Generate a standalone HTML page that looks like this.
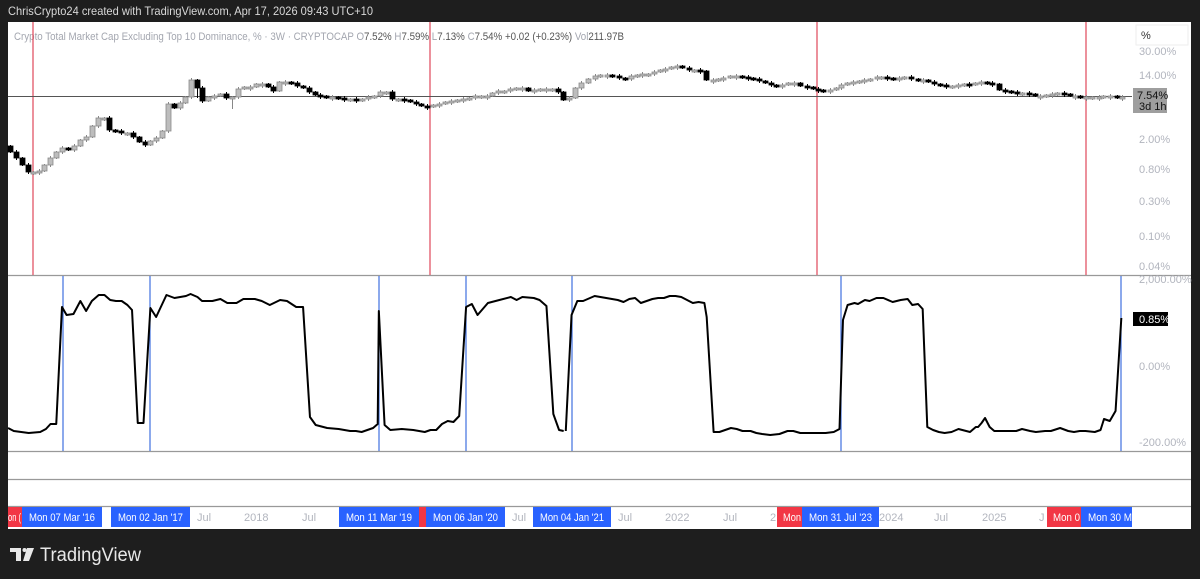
<!DOCTYPE html>
<html><head><meta charset="utf-8"><style>
html,body{margin:0;padding:0;background:#1e1e1e;width:1200px;height:579px;overflow:hidden;font-family:"Liberation Sans",sans-serif}
svg{position:absolute;left:0;top:0}
</style></head><body>
<svg id="s" width="1200" height="579" xmlns="http://www.w3.org/2000/svg" font-family="Liberation Sans, sans-serif">
<rect x="0" y="0" width="1200" height="579" fill="#1e1e1e"/>
<text x="8" y="15" font-size="12" fill="#d8d8d8" textLength="365" lengthAdjust="spacingAndGlyphs">ChrisCrypto24 created with TradingView.com, Apr 17, 2026 09:43 UTC+10</text>
<rect x="8" y="22" width="1183" height="507" fill="#fff"/>
<text x="14" y="40" font-size="11" fill="#a3a6af" textLength="610" lengthAdjust="spacingAndGlyphs">Crypto Total Market Cap Excluding Top 10 Dominance, % · 3W · CRYPTOCAP  O<tspan fill="#555">7.52%</tspan>  H<tspan fill="#555">7.59%</tspan>  L<tspan fill="#555">7.13%</tspan>  C<tspan fill="#555">7.54%</tspan>  <tspan fill="#555">+0.02 (+0.23%)</tspan>  Vol<tspan fill="#555">211.97B</tspan></text>
<line x1="8" y1="275.5" x2="1191" y2="275.5" stroke="#999" stroke-width="1.2"/>
<line x1="8" y1="451.5" x2="1191" y2="451.5" stroke="#999" stroke-width="1.2"/>
<line x1="8" y1="479.5" x2="1191" y2="479.5" stroke="#999" stroke-width="1.2"/>
<line x1="8" y1="506.5" x2="1191" y2="506.5" stroke="#999" stroke-width="1.2"/>
<g stroke="#e0485a" stroke-width="1.2">
<line x1="33" y1="22" x2="33" y2="275"/><line x1="430" y1="22" x2="430" y2="275"/><line x1="817" y1="22" x2="817" y2="275"/><line x1="1086" y1="22" x2="1086" y2="275"/>
</g>
<g stroke="#3f70e0" stroke-width="1.2">
<line x1="63" y1="276" x2="63" y2="451"/><line x1="150" y1="276" x2="150" y2="451"/><line x1="379" y1="276" x2="379" y2="451"/><line x1="466" y1="276" x2="466" y2="451"/><line x1="572" y1="276" x2="572" y2="451"/><line x1="841" y1="276" x2="841" y2="451"/><line x1="1121" y1="276" x2="1121" y2="451"/>
</g>
<line x1="8" y1="96.5" x2="1132" y2="96.5" stroke="#555" stroke-width="1"/>
<g id="candles"></g>
<g fill="none" stroke="#000" stroke-width="2" stroke-linejoin="round">
<polyline vector-effect="non-scaling-stroke" transform="scale(1.148,1)" points="7,428 12,431 25,433 35,432 40,429 44,424 49,424 54,307 58,315 64,314 70,301 75,311 80,301 86,295 91,295 96,300 101,301 106,301 111,305 115,310 120,423 125,423 131,308 136,317 145,295 152,298 162,296 166,294 172,297 176,301 185,301 192,299 198,303 206,303 212,299 222,299 228,301 235,305 244,300 250,301 258,307 264,307 270,417 275,425 285,428 295,429 305,431 310,431 315,432 320,430 325,428 329,424 330,311 335,425 340,430 350,429 360,430 370,432 375,430 380,430 385,424 390,421 395,422 400,416 406,307 411,304 416,315 425,303 435,300 445,297 450,300 455,297 465,298 470,300 476,306 482,414 487,430 491,431"/>
<polyline vector-effect="non-scaling-stroke" transform="translate(560,0) scale(1.155,1) translate(-560,0)" points="565,431 570,315 575,301 580,301 590,296 600,298 610,300 615,302 620,299 625,298 630,303 640,299 645,298 650,298 655,296 660,296 665,297 670,300 675,303 680,302 685,303 687,317 693,432 698,432 703,430 708,428 713,429 718,431 725,431 730,433 735,434 742,435 750,434 757,431 762,431 768,433 775,433 782,433 790,433 797,432 802,429 805,320 809,305 815,303 818,304 824,300 828,301 834,298 840,298 848,302 855,300 861,299 865,305 870,304 874,309 878,427 883,430 888,432 893,433 899,432 905,429 915,432 920,427 922,427 925,423 928,418 932,427 936,431 945,431 955,431 960,429 967,431 972,432 980,431 985,431 993,428 1000,431 1005,432 1010,431 1015,431 1023,432 1028,430 1031,419 1036,421 1041,411 1046,318"/>
</g>
<rect x="1136" y="25" width="52" height="20" fill="#fff" stroke="#eee"/>
<text x="1141" y="39" font-size="11" fill="#333">%</text>
<g font-size="11" fill="#b2b5be">
<text x="1139" y="55">30.00%</text>
<text x="1139" y="79">14.00%</text>
<text x="1139" y="143">2.00%</text>
<text x="1139" y="173">0.80%</text>
<text x="1139" y="205">0.30%</text>
<text x="1139" y="240">0.10%</text>
<text x="1139" y="270">0.04%</text>
<text x="1139" y="283">2,000.00%</text>
<text x="1139" y="370">0.00%</text>
<text x="1139" y="446">-200.00%</text>
</g>
<rect x="1133" y="88" width="34" height="25" fill="#9e9e9e"/>
<text x="1137" y="99" font-size="11" fill="#111">7.54%</text>
<text x="1139" y="110" font-size="11" fill="#111">3d 1h</text>
<rect x="1133" y="312" width="35" height="14" fill="#000"/>
<text x="1139" y="323" font-size="11" fill="#fff">0.85%</text>
<g font-size="11">
<rect x="8" y="507" width="14" height="20" fill="#f23645"/><text x="8" y="521" fill="#fff" textLength="13" lengthAdjust="spacingAndGlyphs">on (</text>
<rect x="22" y="507" width="80" height="20" fill="#2962ff"/><text x="29" y="521" fill="#fff" textLength="66" lengthAdjust="spacingAndGlyphs">Mon 07 Mar '16</text>
<rect x="111" y="507" width="79" height="20" fill="#2962ff"/><text x="118" y="521" fill="#fff" textLength="65" lengthAdjust="spacingAndGlyphs">Mon 02 Jan '17</text>
<text x="197" y="521" fill="#b2b5be">Jul</text><text x="244" y="521" fill="#b2b5be">2018</text><text x="302" y="521" fill="#b2b5be">Jul</text>
<rect x="339" y="507" width="80" height="20" fill="#2962ff"/><text x="346" y="521" fill="#fff" textLength="66" lengthAdjust="spacingAndGlyphs">Mon 11 Mar '19</text>
<rect x="419" y="507" width="7" height="20" fill="#f23645"/>
<rect x="426" y="507" width="79" height="20" fill="#2962ff"/><text x="433" y="521" fill="#fff" textLength="65" lengthAdjust="spacingAndGlyphs">Mon 06 Jan '20</text>
<text x="512" y="521" fill="#b2b5be">Jul</text>
<rect x="533" y="507" width="78" height="20" fill="#2962ff"/><text x="540" y="521" fill="#fff" textLength="64" lengthAdjust="spacingAndGlyphs">Mon 04 Jan '21</text>
<text x="618" y="521" fill="#b2b5be">Jul</text><text x="665" y="521" fill="#b2b5be">2022</text><text x="723" y="521" fill="#b2b5be">Jul</text><text x="770" y="521" fill="#b2b5be">2</text>
<rect x="777" y="507" width="25" height="20" fill="#f23645"/><text x="783" y="521" fill="#fff" textLength="18" lengthAdjust="spacingAndGlyphs">Mon</text>
<rect x="802" y="507" width="77" height="20" fill="#2962ff"/><text x="809" y="521" fill="#fff" textLength="63" lengthAdjust="spacingAndGlyphs">Mon 31 Jul '23</text>
<text x="879" y="521" fill="#b2b5be">2024</text><text x="934" y="521" fill="#b2b5be">Jul</text><text x="982" y="521" fill="#b2b5be">2025</text><text x="1039" y="521" fill="#b2b5be">J</text>
<rect x="1047" y="507" width="34" height="20" fill="#f23645"/><text x="1053" y="521" fill="#fff" textLength="27" lengthAdjust="spacingAndGlyphs">Mon 0</text>
<rect x="1081" y="507" width="51" height="20" fill="#2962ff"/><text x="1088" y="521" fill="#fff" textLength="44" lengthAdjust="spacingAndGlyphs">Mon 30 M</text>
</g>
<path d="M10 548 H21 V561 H16 V552 H10 Z" fill="#e8e8e8"/>
<circle cx="24.5" cy="550" r="2" fill="#e8e8e8"/>
<path d="M27 548 H34 L29 561 H23 Z" fill="#e8e8e8"/>
<text x="40" y="561" font-size="19" fill="#e8e8e8" textLength="101" lengthAdjust="spacingAndGlyphs">TradingView</text>
</svg>
<script>
var pts=[[10,152],[16,158],[22,165],[28,172],[33,172],[39,171],[44,165],[50,158],[56,152],[62,148],[68,150],[74,146],[80,140],[86,137],[92,126],[98,118],[104,118],[109,130],[115,131],[121,133],[127,133],[133,137],[139,142],[145,145],[150,141],[156,138],[162,131],[168,104],[174,108],[180,103],[185,97],[191,80],[197,88],[202,101],[208,97],[214,96],[220,94],[226,98],[232,97],[238,89],[244,87],[250,87],[256,84],[262,84],[268,87],[273,91],[279,82],[285,82],[291,83],[297,86],[303,88],[309,92],[315,95],[320,96],[326,97],[332,97],[338,98],[344,100],[350,99],[356,100],[362,99],[368,97],[374,96],[380,92],[386,92],[392,99],[398,99],[404,100],[410,102],[416,104],[421,106],[427,107],[433,105],[439,104],[445,102],[451,101],[457,100],[463,99],[469,98],[475,96],[481,96],[487,96],[492,93],[498,91],[504,91],[510,89],[516,88],[522,88],[528,91],[534,90],[540,89],[546,89],[552,89],[558,92],[563,100],[569,98],[575,88],[581,83],[588,79],[595,76],[600,75],[607,75],[612,76],[619,78],[625,79],[631,76],[637,75],[642,74],[648,74],[654,72],[660,70],[665,69],[671,67],[677,66],[682,68],[689,70],[694,70],[700,71],[706,80],[713,80],[718,79],[723,78],[730,76],[736,76],[742,77],[748,78],[753,79],[759,81],[765,83],[771,85],[776,87],[782,85],[788,83],[794,83],[800,86],[807,87],[813,89],[818,90],[823,91],[830,90],[836,88],[841,85],[847,83],[853,82],[859,81],[864,80],[870,79],[877,77],[881,77],[887,78],[893,79],[899,78],[904,77],[911,79],[918,80],[923,80],[928,82],[934,84],[940,85],[946,86],[952,86],[958,85],[964,84],[969,85],[975,83],[981,82],[987,83],[992,84],[999,90],[1005,91],[1011,92],[1017,93],[1022,93],[1029,94],[1035,96],[1040,96],[1046,95],[1052,94],[1057,93],[1064,94],[1070,96],[1075,96],[1080,97],[1086,97],[1092,97],[1099,97],[1103,96],[1110,96],[1117,97],[1122,97]];
var g=document.getElementById('candles'),h='',prev=146;
for(var i=0;i<pts.length;i++){var x=pts[i][0],y=pts[i][1];var down=y>prev;var t=Math.min(y,prev),b=Math.max(y,prev);if(b-t<2){b=t+2;}
var wt=t-1-(i%2),wb=b+1+(i%2);if(i==194){wb=110;}if(i==32||i==38){wb=b+10;}
h+='<line x1="'+(x+0.5)+'" y1="'+wt+'" x2="'+(x+0.5)+'" y2="'+wb+'" stroke="'+(down?'#000':'#888')+'" stroke-width="1"/>';
h+='<rect x="'+(x-2)+'" y="'+t+'" width="5" height="'+(b-t)+'" fill="'+(down?'#000':'#bdbdbd')+'" stroke="'+(down?'#000':'#8a8a8a')+'" stroke-width="0.8"/>';prev=y;}
g.innerHTML=h;
</script>
</body></html>
